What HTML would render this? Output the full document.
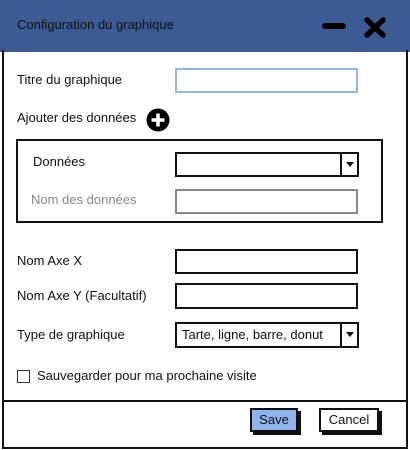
<!DOCTYPE html>
<html><head><meta charset="utf-8"><style>
*{margin:0;padding:0;box-sizing:border-box}
body{width:410px;height:450px;background:#fff;position:relative;overflow:hidden;font-family:"Liberation Sans",sans-serif;font-size:13px;color:#111}
.a{position:absolute}
.hdr{left:0;top:0;width:410px;height:52px;background:#3c5a94}
.win{left:2px;top:50px;width:406px;height:399px;border:2px solid #111;border-top:none}
.lbl{position:absolute;white-space:nowrap;line-height:14px}
.inp{position:absolute;border:2px solid #111;background:#fff}
.arr{position:absolute;right:0;top:0;bottom:0;width:17px;border-left:2px solid #111}
.arr:after{content:"";position:absolute;left:4px;top:8px;border-left:4px solid transparent;border-right:4px solid transparent;border-top:5px solid #111}
.btn{position:absolute;border:2px solid #111;box-shadow:3px 3px 0 #111;text-align:center;line-height:20px;font-size:13px}
</style></head><body>
<div class="a hdr"></div>
<div class="lbl" style="left:17px;top:18px;color:#111;font-size:13px">Configuration du graphique</div>
<div class="a" style="left:322px;top:23px;width:24px;height:6px;background:#000;border-radius:3px"></div>
<svg class="a" style="left:363px;top:16px" width="24" height="23"><path d="M4 4L20 19M20 4L4 19" stroke="#000" stroke-width="5.5" stroke-linecap="round"/></svg>
<div class="a win"></div>

<div class="lbl" style="left:17px;top:73px">Titre du graphique</div>
<div class="inp" style="left:175px;top:68px;width:183px;height:25px;border-color:#8fb4ee"></div>

<div class="lbl" style="left:17px;top:111px">Ajouter des données</div>
<svg class="a" style="left:145px;top:108px" width="26" height="24"><circle cx="13" cy="12" r="11.5" fill="#000"/><path d="M13 5.5V18.5M6.5 12H19.5" stroke="#fff" stroke-width="3.5"/></svg>

<div class="a" style="left:16px;top:139px;width:367px;height:84px;border:2px solid #111"></div>
<div class="lbl" style="left:33px;top:155px">Données</div>
<div class="inp" style="left:175px;top:152px;width:184px;height:25px"><div class="arr"></div></div>
<div class="lbl" style="left:31px;top:193px;color:#888">Nom des données</div>
<div class="inp" style="left:175px;top:189px;width:183px;height:25px;border-color:#888"></div>

<div class="lbl" style="left:17px;top:254px">Nom Axe X</div>
<div class="inp" style="left:175px;top:249px;width:183px;height:25px"></div>
<div class="lbl" style="left:17px;top:289px">Nom Axe Y (Facultatif)</div>
<div class="inp" style="left:175px;top:283px;width:183px;height:26px"></div>

<div class="lbl" style="left:17px;top:328px">Type de graphique</div>
<div class="inp" style="left:175px;top:322px;width:184px;height:26px"><div class="lbl" style="left:5px;top:4px">Tarte, ligne, barre, donut</div><div class="arr"></div></div>

<div class="a" style="left:17px;top:370px;width:13px;height:13px;border:1.5px solid #333"></div>
<div class="lbl" style="left:37px;top:369px">Sauvegarder pour ma prochaine visite</div>

<div class="a" style="left:2px;top:400px;width:406px;height:2px;background:#111"></div>
<div class="btn" style="left:250px;top:408px;width:48px;height:24px;background:#8fb4ee">Save</div>
<div class="btn" style="left:319px;top:408px;width:60px;height:24px;background:#fff">Cancel</div>
</body></html>
